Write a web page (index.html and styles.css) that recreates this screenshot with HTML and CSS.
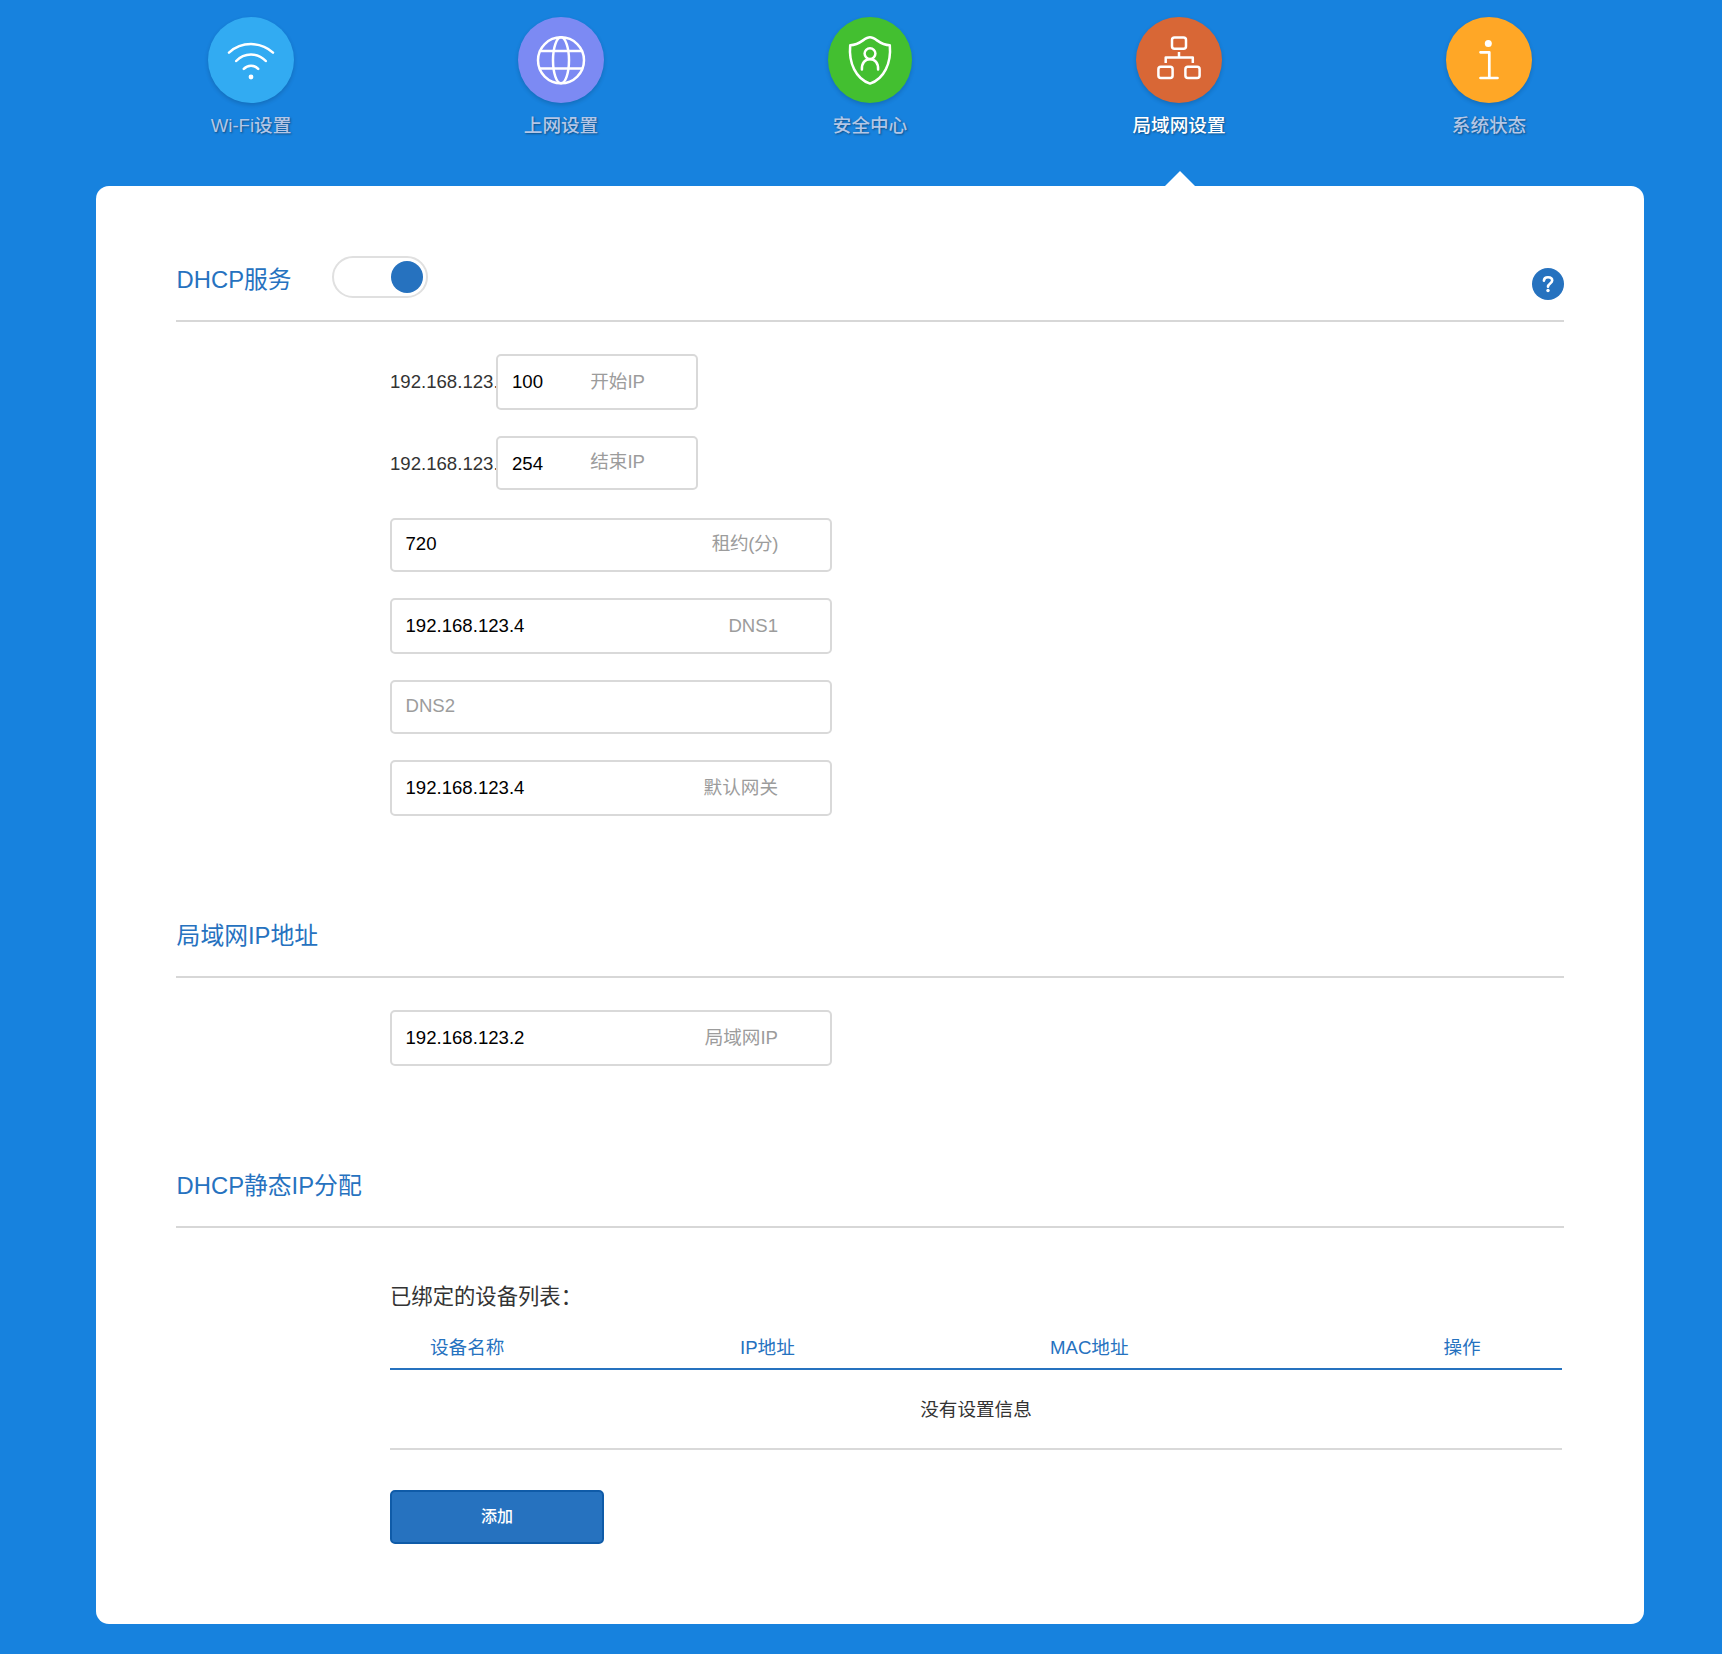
FILE: index.html
```html
<!DOCTYPE html>
<html lang="zh-CN">
<head>
<meta charset="utf-8">
<title>局域网设置</title>
<link rel="stylesheet" href="styles.css">
</head>
<body>
<nav class="nav">
  <a class="nav-item">
    <svg class="nav-icon wifi" viewBox="0 0 86 86"><path d="M21 35.6A32.7 32.7 0 0 1 65 35.6M28.2 44A20.1 20.1 0 0 1 57.8 44M35.8 51.9A9.6 9.6 0 0 1 50.2 51.9"/><circle class="dot" cx="43" cy="60" r="2.4"/></svg>
    <span>Wi-Fi设置</span>
  </a>
  <a class="nav-item">
    <svg class="nav-icon globe" viewBox="0 0 86 86"><circle cx="43" cy="43.3" r="23"/><ellipse cx="43" cy="43.3" rx="8" ry="23"/><path d="M22 34H64M22 51.6H64"/></svg>
    <span>上网设置</span>
  </a>
  <a class="nav-item">
    <svg class="nav-icon shield" viewBox="1 0 84 86"><path d="M43 20.3C37 20.3 34 28 23.2 28.3C21.5 46 29 62 43 66.6C57 62 64.5 46 62.8 28.3C52 28 49 20.3 43 20.3Z"/><circle cx="43" cy="36.6" r="5.4"/><path d="M34.9 52.5C34.6 46 38 42.2 43 42.2S51.4 46 51.1 52.5"/></svg>
    <span>安全中心</span>
  </a>
  <a class="nav-item active">
    <svg class="nav-icon lan" viewBox="0 0 86 86"><rect x="36" y="20.4" width="14" height="11.4" rx="2.5"/><rect x="22.4" y="49.7" width="14.2" height="11.4" rx="2.5"/><rect x="49.4" y="49.7" width="14.2" height="11.4" rx="2.5"/><path d="M43 35V40.6M29.7 46V40.6H56.8V46"/></svg>
    <span>局域网设置</span>
  </a>
  <a class="nav-item">
    <svg class="nav-icon info" viewBox="0 0 86 86"><circle class="dot" cx="42.3" cy="26.5" r="3.5"/><path d="M34.5 35.3H43.3V61M34.5 61H51.5"/></svg>
    <span>系统状态</span>
  </a>
</nav>
<main class="panel">
  <section class="section dhcp">
    <header class="section-head">
      <h2>DHCP服务</h2>
      <span class="toggle"><span class="knob"></span></span>
      <svg class="help" viewBox="0 0 32 32"><circle cx="16" cy="16" r="16"/><path d="M11.9 12.6C12.1 10.3 13.6 9.3 16 9.3C18.5 9.3 20.2 10.5 20.2 12.6C20.2 15.4 16 15.6 16 18.7"/><circle class="help-dot" cx="16" cy="22.5" r="1.7"/></svg>
    </header>
    <div class="form">
      <div class="row tall"><span class="prefix">192.168.123.</span><div class="field narrow"><span class="value">100</span><span class="label">开始IP</span></div></div>
      <div class="row end-ip"><span class="prefix">192.168.123.</span><div class="field narrow"><span class="value">254</span><span class="label">结束IP</span></div></div>
      <div class="row"><div class="field"><span class="value">720</span><span class="label lease">租约(分)</span></div></div>
      <div class="row tall"><div class="field"><span class="value">192.168.123.4</span><span class="label">DNS1</span></div></div>
      <div class="row"><div class="field"><span class="placeholder">DNS2</span></div></div>
      <div class="row tall"><div class="field"><span class="value">192.168.123.4</span><span class="label">默认网关</span></div></div>
    </div>
  </section>
  <section class="section">
    <header class="section-head"><h2>局域网IP地址</h2></header>
    <div class="form">
      <div class="row tall"><div class="field"><span class="value">192.168.123.2</span><span class="label">局域网IP</span></div></div>
    </div>
  </section>
  <section class="section">
    <header class="section-head"><h2>DHCP静态IP分配</h2></header>
    <div class="bindings">
      <h3>已绑定的设备列表：</h3>
      <div class="table-head"><span>设备名称</span><span>IP地址</span><span>MAC地址</span><span>操作</span></div>
      <div class="table-empty">没有设置信息</div>
      <button class="add" type="button">添加</button>
    </div>
  </section>
</main>
</body>
</html>
```
FILE: styles.css
```css
* { box-sizing: border-box; }

body {
  margin: 0;
  min-height: 1654px;
  padding: 0 78px 30px 96px;
  background: #1782de;
  color: #333;
  font: 18.6px/28px "Liberation Sans", "Noto Sans CJK SC", sans-serif;
}

h2, h3 { margin: 0; font-weight: 400; }

/* Top navigation */
.nav {
  display: grid;
  grid-template-columns: 310px 310px 308px 310px 310px;
  height: 186px;
  padding-top: 17px;
}
.nav-item {
  position: relative;
  display: flex;
  flex-direction: column;
  align-items: center;
  gap: 9px;
  color: #b3c6e6;
  font-weight: 500;
  text-shadow: 1px 1px 2px rgba(0, 0, 0, .4);
}
.nav-icon {
  width: 86px;
  height: 86px;
  border-radius: 50%;
  box-shadow: 0 2px 4px rgba(0, 0, 0, .16);
  fill: none;
  stroke: #fff;
  stroke-width: 2.5;
  stroke-linecap: round;
  stroke-linejoin: round;
}
.nav-icon .dot { fill: #fff; stroke: none; }
.wifi { background: #32abf2; }
.globe { background: #7c8af3; }
.shield { width: 84px; background: #43bf30; }
.lan { background: #d86736; stroke-linecap: butt; }
.info { background: #ffa726; stroke-width: 2.7; }
.active { color: #fff; }
.active::after {
  content: "";
  position: absolute;
  left: calc(50% - 14px);
  bottom: 0;
  border: solid transparent;
  border-width: 0 15px 15px;
  border-bottom-color: #fff;
}

/* Content panel */
.panel {
  height: 1438px;
  padding: 0 80px;
  border-radius: 13px;
  background: #fff;
}
.section-head {
  display: flex;
  align-items: flex-start;
  height: 92px;
  padding-top: 32px;
  border-bottom: 2px solid #d7d7d7;
}
.section-head h2 {
  padding-left: .6px;
  color: #2672bf;
  font-size: 23.8px;
  line-height: 36px;
}
.dhcp .section-head { height: 136px; padding-top: 76px; }
.dhcp h2 { width: 116px; }
.toggle {
  display: flex;
  justify-content: flex-end;
  width: 96px;
  height: 42px;
  margin: -6px 0 0 40px;
  padding: 3px;
  border: 2px solid #e0e0e0;
  border-radius: 21px;
}
.knob { width: 32px; height: 32px; border-radius: 50%; background: #2672bf; }
.help {
  width: 32px;
  height: 32px;
  margin: 6px 0 0 auto;
  fill: #2672bf;
}
.help path { fill: none; stroke: #fff; stroke-width: 2.6; stroke-linecap: round; }
.help .help-dot { fill: #fff; }

/* Form rows */
.form {
  display: flex;
  flex-direction: column;
  padding: 32px 0 44px 214px;
}
.row {
  display: flex;
  height: 54px;
  margin-bottom: 26px;
  line-height: 47px;
}
.row.tall { height: 56px; line-height: 51px; }
.row.end-ip { margin-bottom: 28px; }
.prefix { flex: none; width: 106px; padding-top: 2px; white-space: nowrap; }
.field {
  position: relative;
  display: flex;
  justify-content: space-between;
  width: 442px;
  padding: 0 52px 0 13.5px;
  border: 2px solid #d9d9d9;
  border-radius: 5px;
  background: #fff;
}
.narrow { width: 202px; padding: 0 51px 0 14px; }
.value { color: #000; }
.label, .placeholder { color: #9c9c9c; }
.lease { letter-spacing: -.4px; }
.end-ip .value, .end-ip .prefix { line-height: 51px; }

/* Device bindings */
.bindings { padding: 53px 2px 0 214px; }
.bindings h3 { font-size: 21.33px; line-height: 32px; }
.table-head {
  display: grid;
  grid-template-columns: 310px 310px 312px 1fr;
  height: 57px;
  padding: 21px 0 0 40px;
  border-bottom: 2px solid #2672bf;
  color: #2672bf;
}
.table-head span:last-child { text-align: center; }
.table-empty {
  height: 80px;
  border-bottom: 2px solid #d9d9d9;
  line-height: 80px;
  text-align: center;
}
.add {
  display: block;
  width: 214px;
  height: 54px;
  margin-top: 40px;
  padding: 0;
  border: 2px solid #0f5ba8;
  border-radius: 5px;
  background: #2672bf;
  color: #fff;
  font: 500 16px/24px "Liberation Sans", "Noto Sans CJK SC", sans-serif;
}
```
